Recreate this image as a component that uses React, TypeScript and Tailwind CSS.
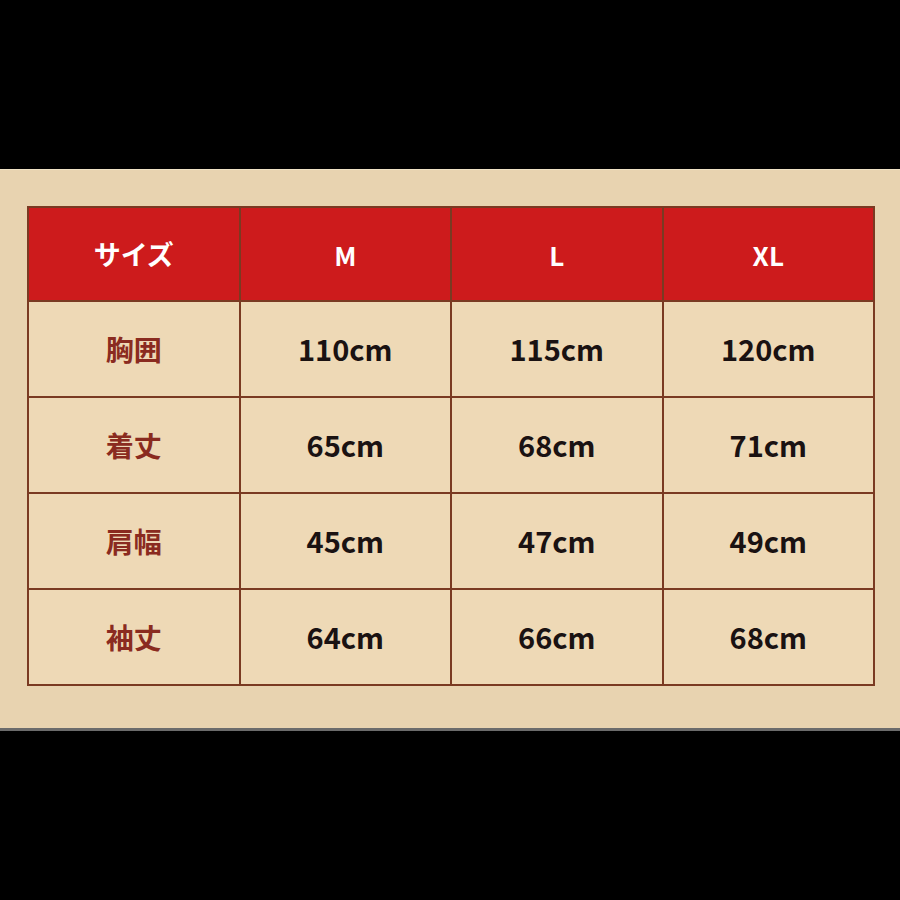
const sizes = ['M', 'L', 'XL'];

const rows = [
  { label: '胸囲', values: ['110cm', '115cm', '120cm'] },
  { label: '着丈', values: ['65cm', '68cm', '71cm'] },
  { label: '肩幅', values: ['45cm', '47cm', '49cm'] },
  { label: '袖丈', values: ['64cm', '66cm', '68cm'] },
];

const font = { fontFamily: '"Noto Sans CJK JP", "Noto Sans", sans-serif' };

export default function App() {
  return (
    <div className="w-[900px] h-[900px] bg-black flex flex-col" style={font}>
      <div className="h-[169px] bg-black" />
      <div className="h-[559px] bg-[#e8d3b0] border-t border-[#f0e2c6] pt-[36px] pl-[27px] pr-[25px]">
        {/* Size table */}
        <div className="grid grid-cols-4 border-2 border-[#7a3a22] bg-[#7a3a22] gap-[2px] w-[848px]">
          <div className="h-[92px] bg-[#cd1b1c] flex items-center justify-center text-white text-[27px] font-bold">
            サイズ
          </div>
          {sizes.map(s => (
            <div key={s} className="h-[92px] bg-[#cd1b1c] flex items-center justify-center text-white text-[26px] font-bold">
              {s}
            </div>
          ))}
          {rows.map(r => (
            <>
              <div key={r.label} className="h-[94px] bg-[#eed9b6] flex items-center justify-center text-[#8a2b20] text-[28px] font-bold">
                {r.label}
              </div>
              {r.values.map((v, i) => (
                <div key={r.label + i} className="h-[94px] bg-[#eed9b6] flex items-center justify-center text-[#1a1212] text-[29px] font-bold">
                  {v}
                </div>
              ))}
            </>
          ))}
        </div>
      </div>
      <div className="h-[3px] bg-[#6b6b6b]" />
      <div className="flex-1 bg-black" />
    </div>
  );
}
